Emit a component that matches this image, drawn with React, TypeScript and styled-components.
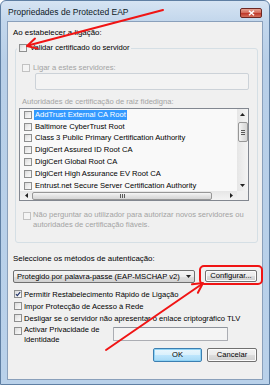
import React from "react";
import styled, { createGlobalStyle } from "styled-components";

const Global = createGlobalStyle`
  html, body { margin: 0; padding: 0; background: #ffffff; }
  body { width: 270px; height: 385px; overflow: hidden; font-family: "Liberation Sans", Arial, sans-serif; }
  * { box-sizing: border-box; }
`;

const Window = styled.div`
  position: relative;
  width: 270px;
  height: 385px;
  border: 1px solid #5f7fa3;
  border-radius: 6px 6px 0 0;
  background: linear-gradient(180deg, #d6e4f3 0px, #c3d7ec 20px, #b8cfe8 60px, #b9d1ea 100%);
  display: flex;
  flex-direction: column;
  font-size: 7.6px;
  color: #000;
`;

const TitleBar = styled.div`
  height: 20px;
  display: flex;
  align-items: flex-start;
  padding-left: 7px;
`;

const Title = styled.div`
  font-size: 8.5px;
  line-height: 10px;
  margin-top: 6px;
  color: #0f1a26;
`;

const CloseButton = styled.div`
  margin-left: auto;
  margin-right: 7px;
  margin-top: 7px;
  width: 22px;
  height: 10px;
  border: 1px solid #6d2722;
  border-radius: 2px;
  background: linear-gradient(180deg, #e7a393 0%, #d56d5c 45%, #c0392b 55%, #d3705c 100%);
  display: flex;
  align-items: center;
  justify-content: center;
`;

const Client = styled.div`
  margin: 0 6px;
  height: 359px;
  border: 1px solid #8aa0bb;
  background: #f0f0f0;
  padding: 0 5px;
`;

const Label = styled.div<{ $top: number }>`
  margin-top: ${(p) => p.$top}px;
  height: 12px;
  line-height: 12px;
  font-size: 7.9px;
  white-space: nowrap;
`;

const Box = styled.span<{ $disabled?: boolean }>`
  flex: none;
  width: 8px;
  height: 8px;
  border: 1px solid ${(p) => (p.$disabled ? "#c2c2c2" : "#8e8f8f")};
  background: ${(p) =>
    p.$disabled
      ? "#f4f4f4"
      : "linear-gradient(135deg, #d9d9d9 0%, #ededed 50%, #fbfbfb 100%)"};
  display: flex;
  align-items: center;
  justify-content: center;
`;

const GroupArea = styled.div`
  margin-top: 4px;
`;

const GroupHeader = styled.div`
  position: relative;
  display: flex;
  align-items: center;
  gap: 3px;
  width: fit-content;
  height: 10px;
  margin-left: 4px;
  padding: 0 2px;
  background: #f0f0f0;
  line-height: 10px;
  white-space: nowrap;
`;

const GroupBox = styled.div`
  margin: -5px 0 0 2px;
  width: 243px;
  height: 195px;
  border: 1px solid #d5dfe5;
  border-radius: 3px;
`;

const CheckRow = styled.div<{ $top: number; $left: number; $gap?: number; $h?: number; $disabled?: boolean }>`
  display: flex;
  align-items: center;
  gap: ${(p) => p.$gap ?? 3}px;
  margin-top: ${(p) => p.$top}px;
  margin-left: ${(p) => p.$left}px;
  height: ${(p) => p.$h ?? 9}px;
  line-height: 10px;
  white-space: nowrap;
  color: ${(p) => (p.$disabled ? "#a3a3a3" : "#000")};
`;

const ServerInput = styled.div`
  margin: 1px 0 0 19px;
  width: 214px;
  height: 17px;
  border: 1px solid #ccd2d8;
  border-radius: 2px;
  background: #f3f3f3;
`;

const GreyLabel = styled.div<{ $top: number; $left: number }>`
  margin-top: ${(p) => p.$top}px;
  margin-left: ${(p) => p.$left}px;
  height: 12px;
  line-height: 12px;
  color: #a3a3a3;
  white-space: nowrap;
`;

const List = styled.div`
  margin-left: 3px;
  width: 230px;
  height: 93px;
  border: 1px solid #828790;
  background: #f9f9f9;
  display: grid;
  grid-template-columns: 1fr 11px;
  grid-template-rows: 1fr 9px;
  overflow: hidden;
`;

const Items = styled.div`
  overflow: hidden;
`;

const Item = styled.div`
  height: 11.8px;
  display: flex;
  align-items: center;
  gap: 3px;
  padding-left: 4px;
  white-space: nowrap;
`;

const ItemText = styled.span<{ $selected?: boolean }>`
  line-height: 10px;
  padding: 0 1px;
  margin-left: -1px;
  background: ${(p) => (p.$selected ? "#3399ff" : "transparent")};
  color: ${(p) => (p.$selected ? "#fff" : "#000")};
`;

const VScroll = styled.div`
  background: linear-gradient(90deg, #e6e6e6, #f4f4f4);
  display: flex;
  flex-direction: column;
  align-items: center;
`;

const ArrowCell = styled.div<{ $grow?: boolean }>`
  width: 11px;
  height: 11px;
  display: flex;
  align-items: center;
  justify-content: center;
  ${(p) => (p.$grow ? "margin-top: auto;" : "")}
`;

const VThumb = styled.div`
  margin-top: 2px;
  width: 10px;
  height: 20px;
  border: 1px solid #979797;
  border-radius: 2px;
  background: linear-gradient(90deg, #f6f6f6, #e3e3e3 50%, #d6d6d6);
  display: flex;
  flex-direction: column;
  align-items: center;
  justify-content: center;
  gap: 1px;
`;

const GripH = styled.span`
  width: 4px;
  height: 1px;
  background: #5a5a5a;
`;

const HScroll = styled.div`
  background: linear-gradient(180deg, #e6e6e6, #f4f4f4);
  display: flex;
  align-items: center;
`;

const HArrowCell = styled.div<{ $right?: boolean }>`
  width: 12px;
  height: 9px;
  display: flex;
  align-items: center;
  justify-content: center;
  ${(p) => (p.$right ? "margin-left: auto;" : "")}
`;

const HThumb = styled.div`
  width: 180px;
  height: 8px;
  border: 1px solid #979797;
  border-radius: 2px;
  background: linear-gradient(180deg, #f6f6f6, #e3e3e3 50%, #d6d6d6);
  display: flex;
  align-items: center;
  justify-content: center;
  gap: 1px;
`;

const GripV = styled.span`
  width: 1px;
  height: 4px;
  background: #5a5a5a;
`;

const Corner = styled.div`
  background: #f0f0f0;
`;

const TwoLine = styled.div<{ $lh: number }>`
  line-height: ${(p) => p.$lh}px;
  white-space: nowrap;
`;

const TopAlignRow = styled.div<{ $top: number; $left: number; $gap: number; $disabled?: boolean }>`
  display: flex;
  align-items: flex-start;
  gap: ${(p) => p.$gap}px;
  margin-top: ${(p) => p.$top}px;
  margin-left: ${(p) => p.$left}px;
  color: ${(p) => (p.$disabled ? "#a3a3a3" : "#000")};
  & > ${Box} { margin-top: 2px; }
`;

const MethodRow = styled.div`
  margin-top: 5px;
  height: 13px;
  display: flex;
  align-items: flex-start;
`;

const Combo = styled.div`
  width: 182px;
  height: 13px;
  border: 1px solid #707070;
  border-radius: 2px;
  background: linear-gradient(180deg, #f4f4f4 0%, #ececec 50%, #dedede 51%, #d2d2d2 100%);
  display: flex;
  align-items: center;
  padding: 0 3px 0 3px;
  white-space: nowrap;
`;

const ComboText = styled.span`
  flex: 1;
  line-height: 10px;
`;

const Button = styled.div<{ $w: number; $default?: boolean }>`
  width: ${(p) => p.$w}px;
  height: 14px;
  border: 1px solid ${(p) => (p.$default ? "#3c7fb1" : "#707070")};
  border-radius: 2px;
  background: ${(p) =>
    p.$default
      ? "linear-gradient(180deg, #eaf6fd 0%, #d9f0fc 50%, #bee6fd 51%, #a7d9f5 100%)"
      : "linear-gradient(180deg, #f2f2f2 0%, #ebebeb 50%, #dddddd 51%, #cfcfcf 100%)"};
  box-shadow: ${(p) => (p.$default ? "inset 0 0 0 1px #8fd3f5" : "inset 0 0 0 1px #fcfcfc")};
  display: flex;
  align-items: center;
  justify-content: center;
  line-height: 10px;
  white-space: nowrap;
`;

const ConfigButton = styled(Button)`
  margin-left: 10px;
  height: 12px;
`;

const ChecksBlock = styled.div`
  margin-top: 5px;
`;

const BottomCheck = styled.div`
  display: flex;
  align-items: center;
  gap: 2px;
  height: 12px;
  margin-left: 1px;
  white-space: nowrap;
`;

const PrivacyRow = styled.div`
  display: flex;
  align-items: flex-start;
  margin-top: 1px;
  height: 20px;
`;

const PrivacyLabel = styled.div`
  width: 100px;
  display: flex;
  align-items: flex-start;
  gap: 2px;
  margin-left: 1px;
  & > ${Box} { margin-top: 2px; }
`;

const PrivacyInput = styled.div`
  margin-top: 2px;
  margin-left: -1px;
  width: 115px;
  height: 14px;
  border: 1px solid #abadb3;
  border-top-color: #8e939b;
  border-radius: 1px;
  background: #f4f4f4;
`;

const ButtonRow = styled.div`
  margin-top: 3px;
  display: flex;
  justify-content: flex-end;
  gap: 5px;
`;

const Overlay = styled.svg`
  position: absolute;
  top: -1px;
  left: -1px;
  pointer-events: none;
`;

const Check = ({ checked, disabled }: { checked?: boolean; disabled?: boolean }) => (
  <Box $disabled={disabled}>
    {checked && (
      <svg width="8" height="8" viewBox="0 0 8 8">
        <path d="M1.2 4.2 L3.1 6.2 L6.9 1.4" fill="none" stroke="#1d2f66" strokeWidth="1.4" />
      </svg>
    )}
  </Box>
);

const Tri = ({ dir }: { dir: "up" | "down" | "left" | "right" }) => {
  const d = {
    up: "M0 3 L2.5 0 L5 3 Z",
    down: "M0 0 L5 0 L2.5 3 Z",
    left: "M3 0 L3 5 L0 2.5 Z",
    right: "M0 0 L3 2.5 L0 5 Z",
  }[dir];
  const w = dir === "up" || dir === "down" ? 5 : 3;
  const h = dir === "up" || dir === "down" ? 3 : 5;
  return (
    <svg width={w} height={h} viewBox={`0 0 ${w} ${h}`}>
      <path d={d} fill="#222" />
    </svg>
  );
};

const certs = [
  "AddTrust External CA Root",
  "Baltimore CyberTrust Root",
  "Class 3 Public Primary Certification Authority",
  "DigiCert Assured ID Root CA",
  "DigiCert Global Root CA",
  "DigiCert High Assurance EV Root CA",
  "Entrust.net Secure Server Certification Authority",
];

export default function App() {
  return (
    <>
      <Global />
      <Window>
        <TitleBar>
          <Title>Propriedades de Protected EAP</Title>
          <CloseButton>
            <svg width="7" height="6" viewBox="0 0 7 6">
              <path d="M1 0.8 L6 5.2 M6 0.8 L1 5.2" stroke="#ffffff" strokeWidth="1.5" />
            </svg>
          </CloseButton>
        </TitleBar>
        <Client>
          <Label $top={5}>Ao estabelecer a ligação:</Label>
          <GroupArea>
            <GroupHeader>
              <Check />
              <span>Validar certificado do servidor</span>
            </GroupHeader>
            <GroupBox>
              <CheckRow $top={14} $left={6} $disabled>
                <Check disabled />
                <span>Ligar a estes servidores:</span>
              </CheckRow>
              <ServerInput />
              <GreyLabel $top={6} $left={6}>Autoridades de certificação de raiz fidedigna:</GreyLabel>
              <List>
                <Items>
                  {certs.map((c, i) => (
                    <Item key={c}>
                      <Check />
                      <ItemText $selected={i === 0}>{c}</ItemText>
                    </Item>
                  ))}
                </Items>
                <VScroll>
                  <ArrowCell>
                    <Tri dir="up" />
                  </ArrowCell>
                  <VThumb>
                    <GripH />
                    <GripH />
                    <GripH />
                  </VThumb>
                  <ArrowCell $grow>
                    <Tri dir="down" />
                  </ArrowCell>
                </VScroll>
                <HScroll>
                  <HArrowCell>
                    <Tri dir="left" />
                  </HArrowCell>
                  <HThumb>
                    <GripV />
                    <GripV />
                    <GripV />
                  </HThumb>
                  <HArrowCell $right>
                    <Tri dir="right" />
                  </HArrowCell>
                </HScroll>
                <Corner />
              </List>
              <TopAlignRow $top={9} $left={7} $gap={2} $disabled>
                <Check disabled />
                <TwoLine $lh={9.5}>
                  Não perguntar ao utilizador para autorizar novos servidores ou
                  <br />
                  autoridades de certificação fiáveis.
                </TwoLine>
              </TopAlignRow>
            </GroupBox>
          </GroupArea>
          <Label $top={10}>Seleccione os métodos de autenticação:</Label>
          <MethodRow>
            <Combo>
              <ComboText>Protegido por palavra-passe (EAP-MSCHAP v2)</ComboText>
              <Tri dir="down" />
            </Combo>
            <ConfigButton $w={52}>Configurar...</ConfigButton>
          </MethodRow>
          <ChecksBlock>
            <BottomCheck>
              <Check checked />
              <span>Permitir Restabelecimento Rápido de Ligação</span>
            </BottomCheck>
            <BottomCheck>
              <Check />
              <span>Impor Protecção de Acesso à Rede</span>
            </BottomCheck>
            <BottomCheck>
              <Check />
              <span>Desligar se o servidor não apresentar o enlace criptográfico TLV</span>
            </BottomCheck>
          </ChecksBlock>
          <PrivacyRow>
            <PrivacyLabel>
              <Check />
              <TwoLine $lh={10}>
                Activar Privacidade de
                <br />
                Identidade
              </TwoLine>
            </PrivacyLabel>
            <PrivacyInput />
          </PrivacyRow>
          <ButtonRow>
            <Button $w={49} $default>
              OK
            </Button>
            <Button $w={50}>Cancelar</Button>
          </ButtonRow>
        </Client>
        <Overlay width="270" height="385" viewBox="0 0 270 385">
          <g stroke="#f01414" strokeWidth="2" fill="none" strokeLinecap="round" strokeLinejoin="round">
            <path d="M163 10 L28 45.5" />
            <path d="M35 38.6 L27 46 L37.7 48.6" />
            <path d="M106 350 L202 284" />
            <path d="M192 284.3 L203 283 L197.9 292.8" />
            <rect x="200" y="266" width="62" height="18" rx="4" />
          </g>
        </Overlay>
      </Window>
    </>
  );
}
